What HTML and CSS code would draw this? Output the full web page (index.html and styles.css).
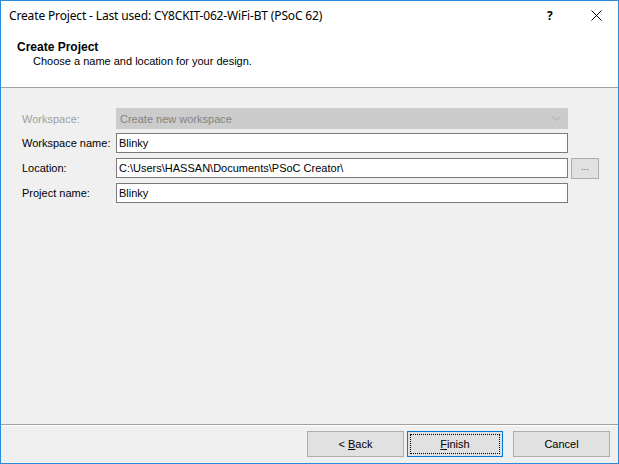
FILE: index.html
```html
<!DOCTYPE html>
<html>
<head>
<meta charset="utf-8">
<link rel="stylesheet" href="styles.css">
</head>
<body>
<div class="window">
  <div class="titlebar">
    <span class="title">Create Project - Last used: CY8CKIT-062-WiFi-BT (PSoC 62)</span>
    <span class="tb-help">?</span>
    <span class="tb-close">
      <svg width="11" height="11" viewBox="0 0 11 11"><path d="M0.5 0.5 L10.5 10.5 M10.5 0.5 L0.5 10.5" stroke="#000" stroke-width="1" fill="none"/></svg>
    </span>
  </div>
  <div class="header">
    <div class="h-title">Create Project</div>
    <div class="h-sub">Choose a name and location for your design.</div>
  </div>
  <div class="content">
    <div class="row row-combo">
      <span class="label disabled">Workspace:</span>
      <div class="combo">
        <span>Create new workspace</span>
        <svg class="arrow" width="9" height="5" viewBox="0 0 9 5"><path d="M0.5 0.5 L4.5 4.5 L8.5 0.5" stroke="#a8a8a8" fill="none"/></svg>
      </div>
    </div>
    <div class="row">
      <span class="label">Workspace name:</span>
      <div class="input">Blinky</div>
    </div>
    <div class="row">
      <span class="label">Location:</span>
      <div class="input">C:\Users\HASSAN\Documents\PSoC Creator\</div>
      <div class="browse">...</div>
    </div>
    <div class="row">
      <span class="label">Project name:</span>
      <div class="input">Blinky</div>
    </div>
  </div>
  <div class="footer">
    <div class="btn btn-back"><span>&lt;&nbsp;<u>B</u>ack</span></div>
    <div class="btn btn-finish"><span class="focus"><span><u>F</u>inish</span></span></div>
    <div class="btn btn-cancel">Cancel</div>
  </div>
</div>
</body>
</html>
```
FILE: styles.css
```css
html, body {
  margin: 0;
  padding: 0;
}
body {
  font-family: "Liberation Sans", Arial, sans-serif;
  font-size: 11px;
  color: #000;
}
.window {
  width: 619px;
  height: 464px;
  box-sizing: border-box;
  border: 1px solid #2b8ad9;
  display: flex;
  flex-direction: column;
  background: #f0f0f0;
}
.titlebar {
  height: 29px;
  background: #fff;
  display: flex;
  align-items: center;
  flex: none;
}
.title {
  font-family: "Noto Sans", "Open Sans", sans-serif;
  font-size: 12px;
  letter-spacing: -0.15px;
  padding-left: 8px;
  flex: 1;
  padding-bottom: 1px;
}
.tb-help {
  font-family: "Noto Sans", sans-serif;
  font-size: 12px;
  font-weight: bold;
  width: 12px;
  margin-right: 32px;
  padding-bottom: 1px;
}
.tb-close {
  display: flex;
  width: 11px;
  margin-right: 16px;
}
.header {
  background: #fff;
  height: 58px;
  flex: none;
  border-bottom: 1px solid #a0a0a0;
  box-sizing: border-box;
  padding-top: 10px;
  padding-left: 16px;
}
.h-title {
  font-weight: bold;
  font-size: 12px;
  line-height: 14px;
}
.h-sub {
  padding-left: 16px;
  line-height: 14px;
  margin-top: 0px;
}
.content {
  flex: 1;
  padding: 20px 0 0 21px;
  display: flex;
  flex-direction: column;
  gap: 5px;
}
.row {
  display: flex;
  align-items: center;
  height: 20px;
}
.row-combo {
  height: 21px;
  margin-bottom: -1px;
}
.label {
  width: 94px;
  flex: none;
}
.label.disabled {
  color: #a0a0a0;
}
.combo {
  width: 452px;
  height: 21px;
  box-sizing: border-box;
  background: #cccccc;
  border: 1px solid #cccccc;
  color: #838383;
  display: flex;
  align-items: center;
  justify-content: space-between;
  padding: 0 6px 0 3px;
}
.input {
  width: 452px;
  height: 20px;
  box-sizing: border-box;
  background: #fff;
  border: 1px solid #7a7a7a;
  display: flex;
  align-items: center;
  padding-left: 2px;
}
.browse {
  margin-left: 3px;
  width: 28px;
  height: 21px;
  box-sizing: border-box;
  background: #e1e1e1;
  border: 1px solid #adadad;
  display: flex;
  align-items: center;
  justify-content: center;
  color: #555;
  font-size: 9px;
  padding-bottom: 2px;
}
.footer {
  height: 39px;
  flex: none;
  border-top: 1px solid #a0a0a0;
  box-shadow: inset 0 1px 0 #fff;
  box-sizing: border-box;
  display: flex;
  justify-content: flex-end;
  align-items: flex-start;
  padding: 6px 8px 0 0;
}
.btn {
  height: 26px;
  box-sizing: border-box;
  background: #e1e1e1;
  border: 1px solid #adadad;
  display: flex;
  align-items: center;
  justify-content: center;
}
.btn u {
  text-decoration: underline;
  text-underline-offset: 1px;
}
.btn-back {
  width: 97px;
}
.btn-finish {
  width: 96px;
  margin-left: 3px;
  border: 1px solid #0078d7;
  padding: 2px;
}
.btn-finish .focus {
  flex: 1;
  align-self: stretch;
  display: flex;
  align-items: center;
  justify-content: center;
  border: 1px dotted #000;
}
.btn-cancel {
  width: 97px;
  margin-left: 10px;
}
```
